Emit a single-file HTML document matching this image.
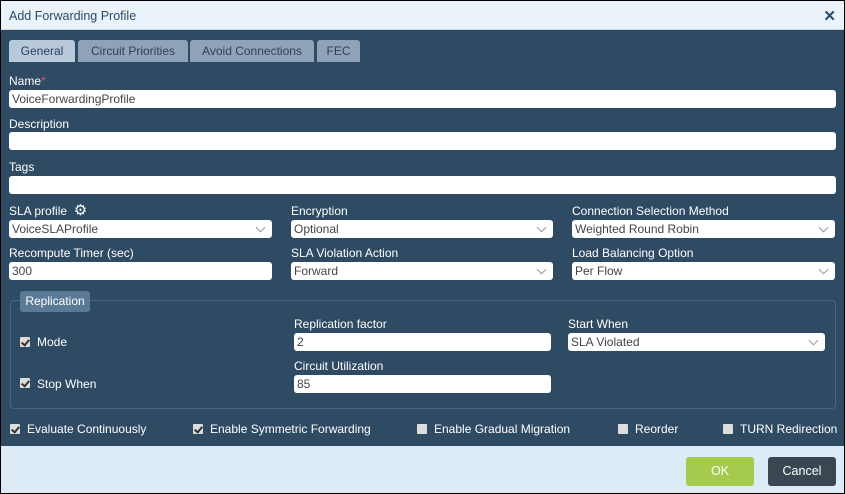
<!DOCTYPE html>
<html><head><style>
*{box-sizing:border-box;margin:0;padding:0}
body{width:845px;height:494px;overflow:hidden;font-family:"Liberation Sans",sans-serif;font-size:12px;background:#000}
.win{position:absolute;left:1px;top:1px;width:843px;height:492px;background:#2f4a63}
.hd{position:absolute;left:0;top:0;width:843px;height:29px;background:#eaf3fa;border-bottom:1px solid #c9d6e0}
.hd span{position:absolute;left:8px;top:8px;color:#2d4b66;font-size:12.5px}
.hd b{position:absolute;right:8px;top:6px;color:#2d4b66;font-size:15px}
.tab{position:absolute;top:39px;height:22px;background:#8ea3b7;color:#2d4257;border-radius:3px 3px 0 0;text-align:center;line-height:22px;font-size:12px}
.lbl{position:absolute;color:#fff;font-size:12px}
.in{position:absolute;height:18px;background:#fff;border-radius:3px;color:#444;padding-left:3px;line-height:18px;font-size:12px}
.sel::after{content:"";position:absolute;right:8px;top:4px;width:6px;height:6px;border-right:1px solid #999;border-bottom:1px solid #999;transform:rotate(45deg)}
.cb{position:absolute;width:10px;height:10px;background:#ddd;border-radius:1px}
.cb.on::after{content:"";position:absolute;left:3px;top:1px;width:3px;height:6px;border-right:2px solid #333;border-bottom:2px solid #333;transform:rotate(40deg)}
.ft{position:absolute;left:0;top:445px;width:843px;height:47px;background:#dcebf6}
.btn{position:absolute;top:456px;height:29px;border-radius:3px;color:#fff;text-align:center;line-height:29px;font-size:12.5px}
</style></head><body><div class="win">
<div class="hd"><span>Add Forwarding Profile</span><b>✕</b></div>
<div class="tab" style="left:8px;width:66px;background:#b7c9da">General</div>
<div class="tab" style="left:77px;width:110px">Circuit Priorities</div>
<div class="tab" style="left:189px;width:124px">Avoid Connections</div>
<div class="tab" style="left:316px;width:43px">FEC</div>
<div class="lbl" style="left:8px;top:73px">Name<span style="color:#e0526e">*</span></div>
<div class="in" style="left:8px;top:89px;width:827px">VoiceForwardingProfile</div>
<div class="lbl" style="left:8px;top:116px">Description</div>
<div class="in" style="left:8px;top:131px;width:827px"></div>
<div class="lbl" style="left:8px;top:159px">Tags</div>
<div class="in" style="left:8px;top:175px;width:827px"></div>
<div class="lbl" style="left:8px;top:203px">SLA profile &nbsp;<span style="font-size:15px;line-height:12px">⚙</span></div>
<div class="in sel" style="left:8px;top:219px;width:263px">VoiceSLAProfile</div>
<div class="lbl" style="left:290px;top:203px">Encryption</div>
<div class="in sel" style="left:290px;top:219px;width:262px">Optional</div>
<div class="lbl" style="left:571px;top:203px">Connection Selection Method</div>
<div class="in sel" style="left:571px;top:219px;width:263px">Weighted Round Robin</div>
<div class="lbl" style="left:8px;top:245px">Recompute Timer (sec)</div>
<div class="in" style="left:8px;top:261px;width:263px">300</div>
<div class="lbl" style="left:290px;top:245px">SLA Violation Action</div>
<div class="in sel" style="left:290px;top:261px;width:262px">Forward</div>
<div class="lbl" style="left:571px;top:245px">Load Balancing Option</div>
<div class="in sel" style="left:571px;top:261px;width:263px">Per Flow</div>
<div style="position:absolute;left:9px;top:299px;width:826px;height:109px;border:1px solid #4a6580;border-radius:4px"></div>
<div style="position:absolute;left:19px;top:290px;width:70px;height:21px;background:#5a7a98;border-radius:3px;color:#fff;line-height:21px;text-align:center">Replication</div>
<div class="cb on" style="left:19px;top:336px"></div><div class="lbl" style="left:36px;top:334px">Mode</div>
<div class="cb on" style="left:19px;top:377px"></div><div class="lbl" style="left:36px;top:376px">Stop When</div>
<div class="lbl" style="left:293px;top:316px">Replication factor</div>
<div class="in" style="left:293px;top:332px;width:257px">2</div>
<div class="lbl" style="left:567px;top:316px">Start When</div>
<div class="in sel" style="left:567px;top:332px;width:257px">SLA Violated</div>
<div class="lbl" style="left:293px;top:358px">Circuit Utilization</div>
<div class="in" style="left:293px;top:374px;width:257px">85</div>
<div class="cb on" style="left:9px;top:423px"></div><div class="lbl" style="left:26px;top:421px">Evaluate Continuously</div>
<div class="cb on" style="left:192px;top:423px"></div><div class="lbl" style="left:209px;top:421px">Enable Symmetric Forwarding</div>
<div class="cb" style="left:416px;top:423px"></div><div class="lbl" style="left:433px;top:421px">Enable Gradual Migration</div>
<div class="cb" style="left:617px;top:423px"></div><div class="lbl" style="left:634px;top:421px">Reorder</div>
<div class="cb" style="left:722px;top:423px"></div><div class="lbl" style="left:739px;top:421px">TURN Redirection</div>
<div class="ft"></div>
<div class="btn" style="left:685px;width:68px;background:#a6cb4c">OK</div>
<div class="btn" style="left:767px;width:68px;background:#3a4752">Cancel</div>
</div></body></html>
